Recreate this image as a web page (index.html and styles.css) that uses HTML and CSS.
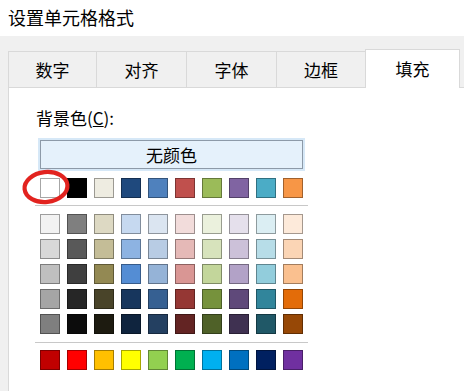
FILE: index.html
```html
<!DOCTYPE html>
<html lang="zh-CN">
<head>
    <meta charset="UTF-8">
    <meta name="viewport" content="width=device-width, initial-scale=1.0">
    <title>设置单元格格式</title>
    <link rel="stylesheet" href="styles.css">
</head>
<body>

<div class="title">设置单元格格式</div>

<div class="dialog">
    <div class="tabs">
        <div class="tab t1">数字</div>
        <div class="tab t2">对齐</div>
        <div class="tab t3">字体</div>
        <div class="tab t4">边框</div>
        <div class="tab active">填充</div>
    </div>

    <div class="panel">
        <div class="label">背景色(<u>C</u>):</div>
        <div class="palette">
            <button class="no-color">无颜色</button>
            <div class="swatches theme" id="themeRow"></div>
            <div class="sep"></div>
            <div class="swatches shades" id="shadeGrid"></div>
            <div class="sep sep2"></div>
            <div class="swatches standard" id="standardRow"></div>
        </div>
    </div>
</div>

<!-- red mark drawn over the white swatch -->
<svg class="mark" width="56" height="42" viewBox="0 0 56 42">
    <ellipse cx="26" cy="21" rx="21.5" ry="15" transform="rotate(-6 26 21)" fill="none" stroke="#e2231f" stroke-width="4.2"/>
</svg>

<script>
    const theme = ['#ffffff', '#000000', '#eeece1', '#1f497d', '#4f81bd', '#c0504d', '#9bbb59', '#8064a2', '#4bacc6', '#f79646'];
    const shades = [
        ['#f2f2f2', '#7f7f7f', '#ddd9c3', '#c6d9f0', '#dbe5f1', '#f2dcdb', '#ebf1dd', '#e5e0ec', '#dbeef3', '#fdeada'],
        ['#d8d8d8', '#595959', '#c4bd97', '#8db3e2', '#b8cce4', '#e5b9b7', '#d7e3bc', '#ccc1d9', '#b7dde8', '#fbd5b5'],
        ['#bfbfbf', '#3f3f3f', '#938953', '#548dd4', '#95b3d7', '#d99694', '#c3d69b', '#b2a2c7', '#92cddc', '#fac08f'],
        ['#a5a5a5', '#262626', '#494429', '#17365d', '#366092', '#953734', '#76923c', '#5f497a', '#31859b', '#e36c09'],
        ['#7f7f7f', '#0c0c0c', '#1d1b10', '#0f243e', '#244061', '#632423', '#4f6128', '#3f3151', '#205867', '#974806']
    ];
    const standard = ['#c00000', '#ff0000', '#ffc000', '#ffff00', '#92d050', '#00b050', '#00b0f0', '#0070c0', '#002060', '#7030a0'];

    function fill(id, colors) {
        const box = document.getElementById(id);
        colors.forEach(c => {
            const s = document.createElement('div');
            s.className = 'swatch';
            s.style.background = c;
            box.appendChild(s);
        });
    }

    fill('themeRow', theme);
    fill('shadeGrid', shades.flat());
    fill('standardRow', standard);
</script>

</body>
</html>
```

FILE: styles.css
```css
body {
    margin: 0;
    font-family: "Noto Sans CJK SC", "Microsoft YaHei", sans-serif;
    color: #000;
    background: #fff;
}
.title {
    height: 36px;
    box-sizing: border-box;
    padding: 5px 0 0 8px;
    font-size: 18px;
    line-height: 24px;
}
.dialog {
    background: #f0f0f0;
    padding: 15px 0 0 8px;
    height: 355px;
    box-sizing: border-box;
    display: flex;
    flex-direction: column;
}
.tabs {
    display: flex;
    align-items: flex-end;
    height: 36px;
}
.tab {
    height: 36px;
    box-sizing: border-box;
    border: 1px solid #d9d9d9;
    border-bottom: none;
    margin-left: -1px;
    display: flex;
    align-items: center;
    justify-content: center;
    font-size: 17px;
    background: #f0f0f0;
}
.tab.t1 {
    margin-left: 0;
    width: 89px;
}
.tab.t2,
.tab.t3 {
    width: 91px;
}
.tab.t4 {
    width: 90px;
}
.tab.active {
    width: 95px;
    height: 39px;
    margin-bottom: -1px;
    background: #fff;
    position: relative;
    z-index: 1;
    padding-bottom: 1px;
}
.panel {
    flex: 1;
    background: #fff;
    border-top: 1px solid #d9d9d9;
    border-left: 1px solid #d9d9d9;
    padding: 20px 0 0 26px;
}
.label {
    font-size: 17px;
    line-height: 20px;
    padding-left: 1px;
}
.palette {
    width: 273px;
}
.no-color {
    display: block;
    margin: 12px 5px 0;
    width: 263px;
    height: 29px;
    box-sizing: border-box;
    border: 1px solid #8d9aa8;
    background: #e5f1fb;
    box-shadow: 0 0 0 2px #d6e8f7;
    font-family: inherit;
    font-size: 17px;
    color: #000;
    padding: 0;
}
.swatches {
    display: grid;
    grid-template-columns: repeat(10, 20px);
    column-gap: 7px;
    row-gap: 5px;
    padding: 0 5px;
}
.swatch {
    width: 20px;
    height: 20px;
    box-sizing: border-box;
    border: 1px solid rgba(0, 0, 0, 0.35);
}
.theme {
    margin-top: 9px;
}
.sep {
    height: 1px;
    background: #c8c8c8;
    margin: 7px 0 8px;
}
.sep2 {
    margin: 8px 0 7px;
}
.mark {
    position: absolute;
    left: 20px;
    top: 166px;
}
```
